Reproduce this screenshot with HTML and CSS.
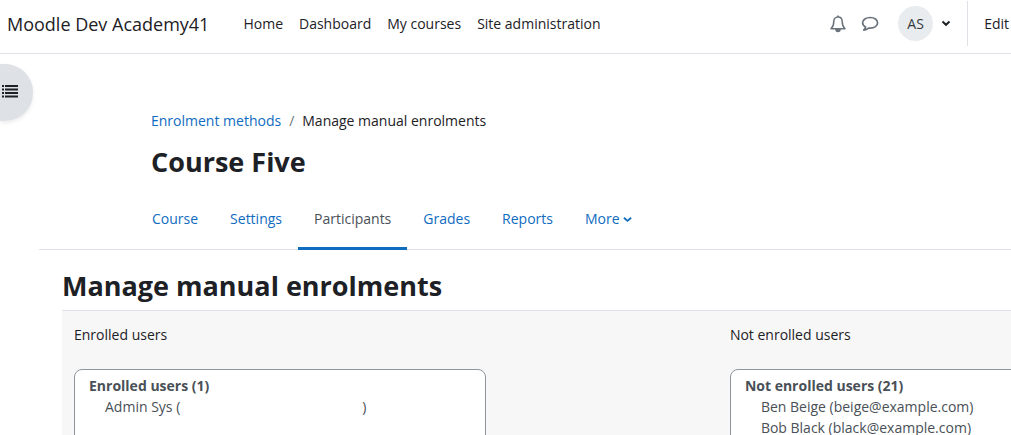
FILE: index.html
```html
<!DOCTYPE html>
<html lang="en">

<head>
  <meta charset="utf-8">
  <title>Manage manual enrolments</title>
  <link rel="stylesheet" href="styles.css">
</head>

<body>
  <nav class="navbar">
    <a class="brand" href="#">Moodle Dev Academy41</a>
    <div class="primary-nav">
      <a href="#">Home</a>
      <a href="#">Dashboard</a>
      <a href="#">My courses</a>
      <a href="#">Site administration</a>
    </div>
    <div class="user-nav">
      <button class="icon-btn" type="button" aria-label="Notifications">
        <svg width="16" height="18" viewBox="0 0 16 18" fill="none" stroke="#6a737b" stroke-width="1.5">
          <path d="M8 2C5 2 3.8 4.2 3.8 6.500C3.800 10 3 12 1 13.800H15C13 12 12.200 10 12.200 6.500C12.200 4.200 11 2 8 2Z" stroke-linejoin="round" />
          <path d="M8 .5V2" />
          <path d="M6 14.500a2 2 0 0 0 4 0Z" fill="#6a737b" />
        </svg>
      </button>
      <button class="icon-btn" type="button" aria-label="Messages">
        <svg width="18" height="16" viewBox="0 0 18 16" fill="none" stroke="#6a737b" stroke-width="1.7" stroke-linejoin="round">
          <path d="M9.200 1.500C4.900 1.500 1.600 3.800 1.600 6.800C1.600 8.600 2.800 10.100 4.600 11C4.400 12.300 3.800 13.200 2.800 14.200C4.900 14 6.500 13.200 7.600 12C8.100 12.100 8.600 12.100 9.200 12.100C13.400 12.100 16.600 9.800 16.600 6.800C16.600 3.800 13.400 1.500 9.200 1.500Z" />
        </svg>
      </button>
      <button class="user-menu" type="button" aria-label="User menu">
        <span class="avatar">AS</span>
        <svg width="10" height="7" viewBox="0 0 10 7" fill="none" stroke="#1d2125" stroke-width="2">
          <path d="M1.500 1.500L5 4.800L8.500 1.500" />
        </svg>
      </button>
      <div class="edit-mode">Edit</div>
    </div>
  </nav>

  <button class="drawer-toggle" type="button" aria-label="Open course index">
    <svg width="16" height="14" viewBox="0 0 16 14" fill="#1d2125">
      <path d="M0 1h2v2H0zM3 1h13v2H3zM0 4.500h2v2H0zM3 4.500h13v2H3zM0 8h2v2H0zM3 8h13v2H3zM0 11.500h2v2H0zM3 11.500h13v2H3z" />
    </svg>
  </button>

  <main class="page">
    <header class="page-header">
      <div class="breadcrumb">
        <a href="#">Enrolment methods</a>
        <span class="divider">/</span>
        <span>Manage manual enrolments</span>
      </div>
      <h1>Course Five</h1>
    </header>

    <nav class="tabs">
      <a href="#">Course</a>
      <a href="#">Settings</a>
      <a class="active" href="#">Participants</a>
      <a href="#">Grades</a>
      <a href="#">Reports</a>
      <a href="#">More
        <svg class="caret" width="9" height="7" viewBox="0 0 10 7" fill="none" stroke="#0f6cbf" stroke-width="2">
          <path d="M1 1.500L5 5L9 1.500" />
        </svg>
      </a>
    </nav>

    <section class="content">
      <h2>Manage manual enrolments</h2>
      <div class="enrol-form">
        <div class="user-list existing">
          <label for="removeselect">Enrolled users</label>
          <select id="removeselect" multiple size="20">
            <optgroup label="Enrolled users (1)">
              <option>Admin Sys (&emsp;&emsp;&emsp;&emsp;&emsp;&emsp;&emsp;&emsp;&emsp;&emsp;&emsp;&emsp;&emsp;)</option>
            </optgroup>
          </select>
        </div>
        <div class="user-list potential">
          <label for="addselect">Not enrolled users</label>
          <select id="addselect" multiple size="20">
            <optgroup label="Not enrolled users (21)">
              <option>Ben Beige (beige@example.com)</option>
              <option>Bob Black (black@example.com)</option>
            </optgroup>
          </select>
        </div>
      </div>
    </section>
  </main>
</body>

</html>
```

FILE: styles.css
```css
* {
  box-sizing: border-box;
}

body {
  margin: 0;
  height: 100vh;
  overflow: hidden;
  background-color: #fff;
  color: #1d2125;
  font-family: "Open Sans", "Noto Sans", sans-serif;
  font-size: 14px;
  line-height: 22px;
}

a {
  color: #0f6cbf;
  text-decoration: none;
}

button {
  padding: 0;
  border: 0;
  background: none;
  color: inherit;
  font: inherit;
}

h1,
h2 {
  margin: 0;
  font-size: 27px;
  line-height: 36px;
  font-weight: 700;
}

/* Top bar */
.navbar {
  display: flex;
  align-items: center;
  height: 54px;
  padding: 0 2px 6px 7px;
  border-bottom: 1px solid #dee2e6;
  white-space: nowrap;
}

.navbar a {
  color: #1d2125;
}

.brand {
  font-size: 18px;
}

.primary-nav {
  display: flex;
  gap: 16px;
  margin-left: 34px;
}

.user-nav {
  display: flex;
  align-items: center;
  margin-left: auto;
}

.icon-btn {
  display: flex;
  justify-content: center;
  width: 32px;
}

.user-menu {
  display: flex;
  align-items: center;
  gap: 8px;
  margin: 0 16px 0 12px;
}

.avatar {
  width: 35px;
  border-radius: 50%;
  background-color: #e9ecef;
  color: #343a40;
  line-height: 35px;
  text-align: center;
}

.edit-mode {
  padding-left: 16px;
  border-left: 1px solid #dee2e6;
  line-height: 45px;
}

.drawer-toggle {
  position: absolute;
  top: 64px;
  left: 0;
  width: 33px;
  height: 57px;
  padding-left: 2px;
  border-radius: 0 28px 28px 0;
  background-color: #dee2e6;
  box-shadow: 0 2px 4px rgba(0, 0, 0, 0.08);
  text-align: left;
}

/* Page header and tabs */
.page {
  margin-left: 39px;
}

.page-header {
  padding: 56px 0 0 112px;
}

.breadcrumb {
  display: flex;
  gap: 8px;
  margin-bottom: 12px;
}

.divider {
  color: #6a737b;
}

.tabs {
  display: flex;
  margin-top: 12px;
  padding-left: 97px;
  border-bottom: 1px solid #dee2e6;
}

.tabs a {
  margin-bottom: -1px;
  padding: 16px 16px 17px;
  border-bottom: 3px solid transparent;
}

.tabs .active {
  border-bottom-color: #0f6cbf;
  color: #495057;
}

.caret {
  vertical-align: 1px;
}

/* Enrolment form */
.content {
  padding: 18px 0 0 23px;
}

.enrol-form {
  display: grid;
  grid-template-columns: 44% 44%;
  column-gap: 26%;
  margin-top: 6px;
  padding: 13px 0 12px 12px;
  border-top: 1px solid #dee2e6;
  background-color: #f7f7f7;
}

.user-list label {
  display: block;
  margin-bottom: 23px;
}

.user-list select {
  width: 100%;
  padding: 6px 12px;
  border: 1px solid #8f959e;
  border-radius: 8px;
  background-color: #fff;
  color: #495057;
  font: inherit;
}

.user-list option {
  padding: 1px 2px 1px 18px;
}
```
